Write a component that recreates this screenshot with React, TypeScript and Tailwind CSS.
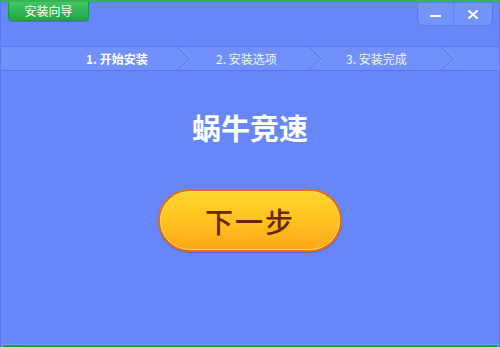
import React from "react";

const font = { fontFamily: '"Noto Sans CJK SC", "Noto Sans", sans-serif' };

function Chevron() {
  return (
    <svg width="14" height="23" viewBox="0 0 14 23" className="shrink-0">
      <path d="M0.5 0 L12.5 11.5 L0.5 23" fill="none" stroke="#5c7cee" strokeWidth="1.2" />
      <path d="M1.8 0 L13.5 11.5 L1.8 23" fill="none" stroke="#8aa6ff" strokeWidth="0.8" />
    </svg>
  );
}

export default function App() {
  return (
    <div
      className="relative w-[500px] h-[347px] bg-[#6787f9] border-t-[2px] border-t-[#36b454] border-x border-x-[#5a79ec] flex flex-col overflow-hidden"
      style={font}
    >
      {/* header */}
      <div className="flex justify-between items-start h-[44px] border-t border-t-[#5d7df0]">
        <div className="ml-[7px] -mt-[1px] w-[81px] h-[19px] rounded-b-[4px] bg-gradient-to-b from-[#3cc865] to-[#22a648] border border-[#1f9a44] border-t-0 flex items-center justify-center text-white text-[12px] leading-none shadow-[0_1px_0_#4d6de0]">
          安装向导
        </div>
        <div className="mr-[6px] mt-0 flex h-[23px] rounded-b-[6px] bg-[#7593fc] border border-t-0 border-[#5a79ea] overflow-hidden">
          <div className="w-[36px] flex items-center justify-center border-r border-r-[#6584f4]">
            <div className="w-[11px] h-[2px] bg-white mt-[4px]" />
          </div>
          <div className="w-[38px] flex items-center justify-center">
            <svg width="10" height="9" viewBox="0 0 10 9" className="mt-[1px]">
              <path d="M1 1 L9 8 M9 1 L1 8" stroke="white" strokeWidth="2" strokeLinecap="square" />
            </svg>
          </div>
        </div>
      </div>

      {/* step bar */}
      <div className="h-[25px] border-y border-y-[#5676ea] bg-[#7190fc] flex items-stretch text-[12px] text-white">
        <div className="w-[57px]" />
        <div className="w-[133px] flex items-center justify-between">
          <span className="pl-[28px] font-bold">1. 开始安装</span>
          <Chevron />
        </div>
        <div className="w-[132px] flex items-center justify-between">
          <span className="pl-[25px] text-[#f0f4ff]">2. 安装选项</span>
          <Chevron />
        </div>
        <div className="w-[132px] flex items-center justify-between">
          <span className="pl-[23px] text-[#f0f4ff]">3. 安装完成</span>
          <Chevron />
        </div>
      </div>

      {/* title */}
      <div className="mt-[38px] text-center text-white font-bold text-[29px] leading-[37px]">
        蜗牛竞速
      </div>

      {/* button */}
      <div className="mt-[43px] flex justify-center">
        <div className="w-[184px] h-[63px] rounded-full bg-[#e8700c] p-[2px] shadow-[0_1px_1px_rgba(60,60,140,0.4)]">
          <div className="w-full h-full rounded-full bg-gradient-to-b from-[#ffd62c] via-[#ffc21e] to-[#ffa61a] border border-[#ffe07a] flex items-center justify-center">
            <span className="text-[28px] leading-none text-[#6a2600] font-medium tracking-[2px]">下一步</span>
          </div>
        </div>
      </div>

      {/* bottom */}
      <div className="absolute left-0 right-0 bottom-[2px] h-px bg-[#7b98ff]" />
      <div className="absolute left-[2px] right-[2px] bottom-0 h-[2px] bg-[#1f9e4a]" />
    </div>
  );
}
